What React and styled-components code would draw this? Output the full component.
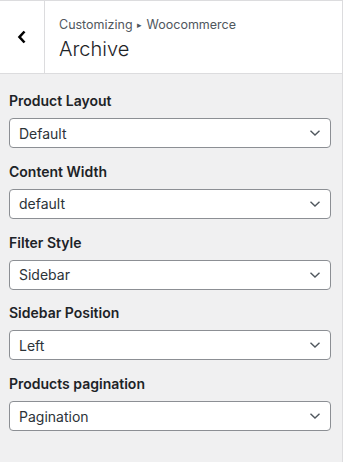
import React from 'react';
import styled, { createGlobalStyle } from 'styled-components';

const GlobalStyle = createGlobalStyle`
  html, body {
    margin: 0;
    padding: 0;
    background: #f0f0f1;
  }
  body {
    font-family: Inter, Roboto, "Noto Sans", sans-serif;
    -webkit-font-smoothing: antialiased;
  }
`;

const Panel = styled.div`
  width: 343px;
  height: 462px;
  box-sizing: border-box;
  background: #f0f0f1;
  border-right: 1px solid #dcdcde;
  display: flex;
  flex-direction: column;
`;

const Header = styled.div`
  display: flex;
  height: 74px;
  box-sizing: border-box;
  background: #fff;
  border-top: 1px solid #dcdcde;
  border-bottom: 1px solid #dcdcde;
`;

const BackButton = styled.button`
  width: 45px;
  flex: none;
  border: 0;
  border-right: 1px solid #dcdcde;
  background: #fff;
  padding: 0;
  display: flex;
  align-items: center;
  justify-content: center;
  cursor: pointer;
  color: #000;
`;

const Titles = styled.div`
  display: flex;
  flex-direction: column;
  justify-content: center;
  padding: 3px 0 0 14px;
  gap: 2px;
`;

const Crumb = styled.div`
  font-size: 12.5px;
  line-height: 18px;
  color: #50575e;
`;

const Arrow = styled.span`
  font-size: 9px;
  vertical-align: 1px;
  margin: 0 1px;
`;

const Title = styled.div`
  font-size: 20px;
  line-height: 26px;
  font-weight: 300;
  color: #1d2327;
`;

const Body = styled.div`
  display: flex;
  flex-direction: column;
  gap: 12.75px;
  padding: 16px 11px 0 9px;
`;

const Field = styled.div`
  display: flex;
  flex-direction: column;
  gap: 6px;
`;

const Label = styled.label`
  font-size: 14px;
  line-height: 22px;
  font-weight: 600;
  color: #1d2327;
`;

const SelectBox = styled.div`
  height: 30px;
  box-sizing: border-box;
  background: #fff;
  border: 1px solid #8c8f94;
  border-radius: 4px;
  display: flex;
  align-items: center;
  justify-content: space-between;
  padding: 0 9px 0 9px;
  font-size: 14px;
  color: #2c3338;
`;

const Chevron = () => (
  <svg width="12" height="8" viewBox="0 0 12 8" fill="none">
    <path d="M1.5 1.8 L6 6 L10.5 1.8" stroke="#50575e" strokeWidth="1.4" />
  </svg>
);

const fields = [
  { label: 'Product Layout', value: 'Default' },
  { label: 'Content Width', value: 'default' },
  { label: 'Filter Style', value: 'Sidebar' },
  { label: 'Sidebar Position', value: 'Left' },
  { label: 'Products pagination', value: 'Pagination' },
];

export default function App() {
  return (
    <>
      <GlobalStyle />
      <Panel>
        <Header>
          <BackButton aria-label="Back">
            <svg width="10" height="14" viewBox="0 0 10 14" fill="none">
              <path d="M7.5 1.5 L2.5 7 L7.5 12.5" stroke="#000" strokeWidth="2.6" />
            </svg>
          </BackButton>
          <Titles>
            <Crumb>
              Customizing <Arrow>▸</Arrow> Woocommerce
            </Crumb>
            <Title>Archive</Title>
          </Titles>
        </Header>
        <Body>
          {fields.map((f) => (
            <Field key={f.label}>
              <Label>{f.label}</Label>
              <SelectBox>
                <span>{f.value}</span>
                <Chevron />
              </SelectBox>
            </Field>
          ))}
        </Body>
      </Panel>
    </>
  );
}
